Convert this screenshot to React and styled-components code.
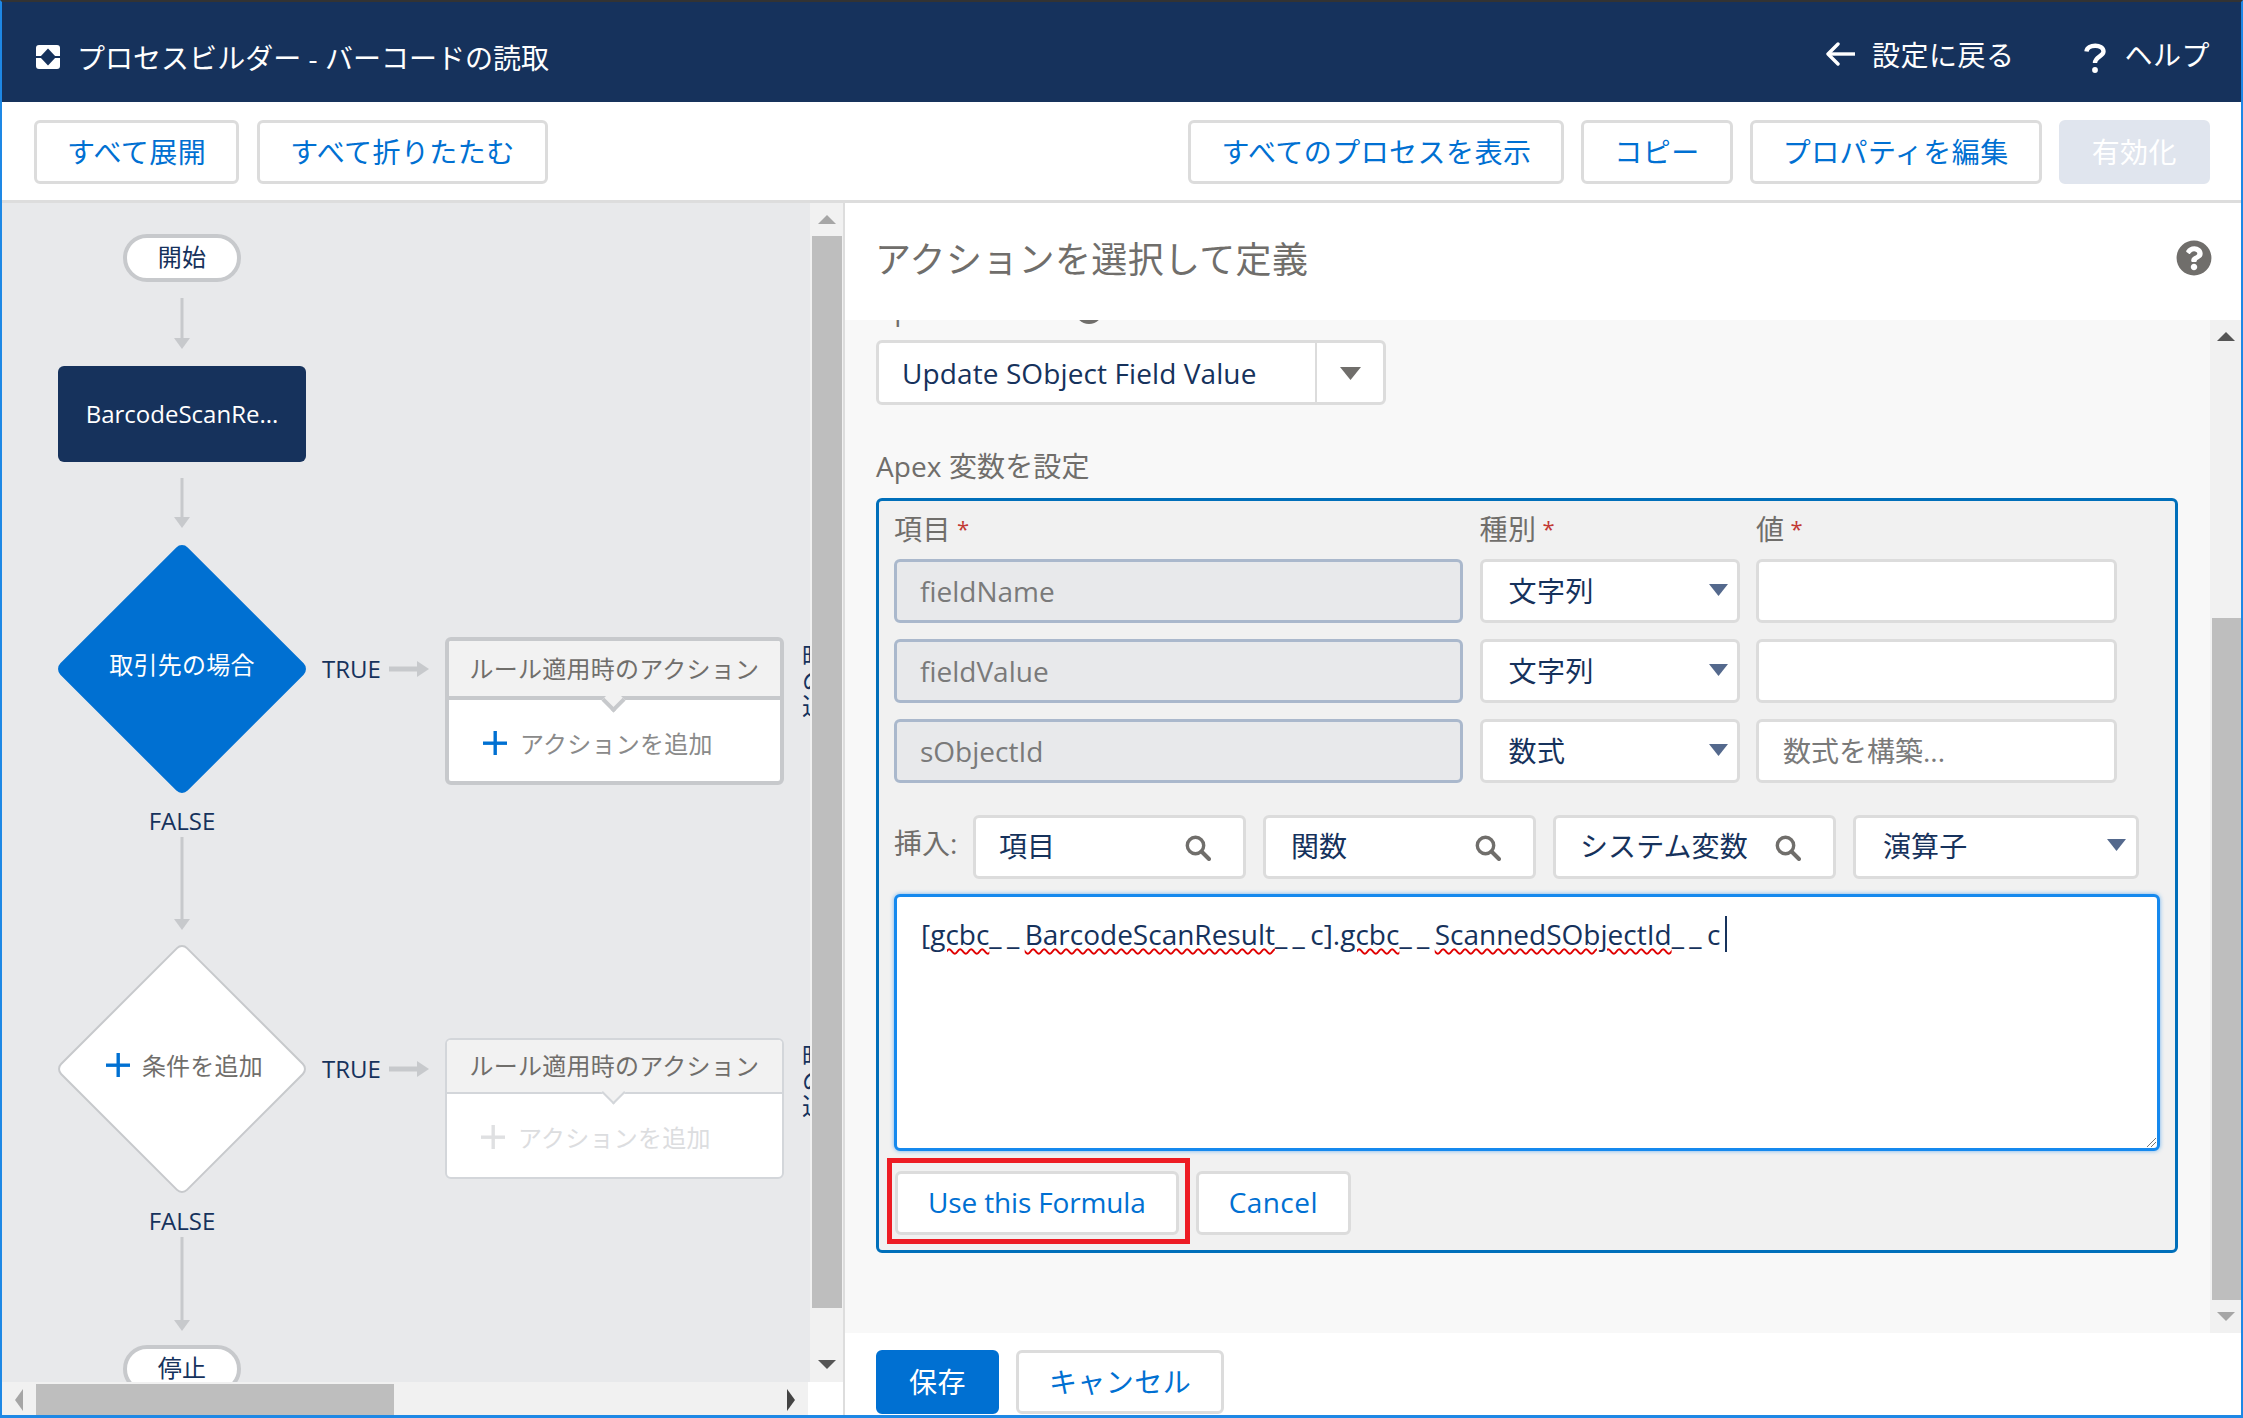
import React from "react";
import styled, {createGlobalStyle} from "styled-components";
import {FaQuestionCircle} from "react-icons/fa";

const GlobalStyle = createGlobalStyle`
  *, *::before, *::after {
    box-sizing: border-box;
  }
  html, body {
    margin: 0;
    padding: 0;
    background: #fff;
  }
  body {
    font-family: "Open Sans", "Noto Sans CJK JP", sans-serif;
    font-size: 28px;
    letter-spacing: 0.5px;
    color: #16325c;
  }
`;

const NODE_GREY = "#c7c9cc";

function DownArrow({height, gapTop = 16, gapBottom = 17}) {
  return (
    <DownArrowSvg
      width="16"
      height={height}
      viewBox={`0 0 16 ${height}`}
      $gapTop={gapTop}
      $gapBottom={gapBottom}
    >
      <rect x="6.5" y="0" width="3" height={height - 8} fill={NODE_GREY} />
      <polygon points={`0,${height - 11} 16,${height - 11} 8,${height}`} fill={NODE_GREY} />
    </DownArrowSvg>
  );
}

function RightArrow() {
  return (
    <RightArrowSvg width="40" height="16" viewBox="0 0 40 16">
      <rect x="0" y="5.5" width="30" height="5" fill={NODE_GREY} />
      <polygon points="28,0 40,8 28,16" fill={NODE_GREY} />
    </RightArrowSvg>
  );
}

function Plus({muted}) {
  return (
    <PlusSvg width="24" height="24" viewBox="0 0 24 24" $muted={muted}>
      <rect x="10.5" y="0" width="3.4" height="24" fill="currentColor" />
      <rect x="0" y="10.5" width="24" height="3.4" fill="currentColor" />
    </PlusSvg>
  );
}

function Caret({width = 19, height = 12}) {
  return (
    <CaretSvg width={width} height={height} viewBox="0 0 19 12" preserveAspectRatio="none">
      <polygon points="0,0 19,0 9.5,12" fill="currentColor" />
    </CaretSvg>
  );
}

function SearchIcon() {
  return (
    <SearchSvg width="26" height="26" viewBox="0 0 26 26">
      <circle cx="10.5" cy="10.5" r="8.2" fill="none" stroke="#706e6b" strokeWidth="3.4" />
      <path d="M16.5 16.5 L24 24" stroke="#706e6b" strokeWidth="4" strokeLinecap="round" />
    </SearchSvg>
  );
}

function Decision({added, label}) {
  return (
    <DecisionRow>
      <Diamond $outline={added}>
        {added ? (
          <DiamondLabel $outline>
            <Plus />
            <span>条件を追加</span>
          </DiamondLabel>
        ) : (
          <DiamondLabel>{label}</DiamondLabel>
        )}
      </Diamond>
      <TrueLabel>TRUE</TrueLabel>
      <RightArrow />
      <RuleBox $muted={added}>
        <RuleHead $muted={added}>ルール適用時のアクション</RuleHead>
        <RuleBody $muted={added}>
          <Plus muted={added} />
          <span>アクションを追加</span>
        </RuleBody>
      </RuleBox>
      <ClippedNote>
        時<br />
        の<br />
        追
      </ClippedNote>
    </DecisionRow>
  );
}

function TypeSelect({children}) {
  return (
    <FieldBox>
      <span>{children}</span>
      <Caret />
    </FieldBox>
  );
}

export default function App() {
  return (
    <Window>
      <GlobalStyle />
      <Header>
        <HeaderTitle>
          <svg width="24" height="24" viewBox="0 0 24 24">
            <rect width="24" height="24" rx="3" fill="#fff" />
            <rect x="0" y="11" width="24" height="2" fill="#16325c" />
            <polygon points="12,3.5 20,12 12,20.5 4,12" fill="#16325c" />
          </svg>
          <span>プロセスビルダー - バーコードの読取</span>
        </HeaderTitle>
        <HeaderLinks>
          <HeaderLink $gap="16px">
            <svg width="31" height="24" viewBox="0 0 31 24" fill="none" stroke="#fff" strokeWidth="3.4">
              <path d="M3 12 H30" />
              <path d="M13 2 L3 12 L13 22" strokeLinecap="round" strokeLinejoin="round" />
            </svg>
            設定に戻る
          </HeaderLink>
          <HeaderLink $gap="18px">
            <HelpGlyph width="22" height="30" viewBox="0 0 22 30" fill="none" stroke="#fff">
              <path d="M2.5 8.5 C3 1 19.5 0.5 19.5 8.5 C19.5 13.5 11 13.5 11 20" strokeWidth="4.4" />
              <circle cx="11" cy="27" r="2.9" fill="#fff" stroke="none" />
            </HelpGlyph>
            ヘルプ
          </HeaderLink>
        </HeaderLinks>
      </Header>

      <Toolbar>
        <ToolGroup $gap="18px">
          <Button>すべて展開</Button>
          <Button>すべて折りたたむ</Button>
        </ToolGroup>
        <ToolGroup $gap="17px">
          <Button>すべてのプロセスを表示</Button>
          <Button>コピー</Button>
          <Button>プロパティを編集</Button>
          <Button $disabled>有効化</Button>
        </ToolGroup>
      </Toolbar>

      <Main>
        <LeftPane>
          <CanvasRow>
            <Canvas>
              <Pill>開始</Pill>
              <DownArrow height={51} />
              <ActionNode>BarcodeScanRe...</ActionNode>
              <DownArrow height={50} gapBottom={16} />
              <Decision label="取引先の場合" />
              <FalseLabel>FALSE</FalseLabel>
              <DownArrow height={93} gapTop={0} gapBottom={14} />
              <Decision added />
              <FalseLabel>FALSE</FalseLabel>
              <DownArrow height={94} gapTop={0} gapBottom={14} />
              <Pill>停止</Pill>
            </Canvas>
            <VScroll $width="33px">
              <ScrollEnd $height="33px">
                <ScrollTri $dir="up" $color="#a6a6a6" />
              </ScrollEnd>
              <CanvasThumb />
              <ScrollEnd $height="74px">
                <ScrollTri $dir="down" $color="#555" $top="52px" />
              </ScrollEnd>
            </VScroll>
          </CanvasRow>
          <HScrollRow>
            <HScroll>
              <ScrollTri $dir="left" $color="#a6a6a6" />
              <HThumb />
              <ScrollTri $dir="right" $color="#444" />
            </HScroll>
          </HScrollRow>
        </LeftPane>

        <RightPane>
          <PaneTitle>
            <h2>アクションを選択して定義</h2>
            <FaQuestionCircle size={36} color="#706e6b" />
          </PaneTitle>
          <PaneBody>
            <PaneContent>
              <ClippedLabelRow>
                <span>Apex</span>
                <InfoDot />
              </ClippedLabelRow>
              <ActionSelect>
                <span>Update SObject Field Value</span>
                <ActionCaret>
                  <Caret width={21} height={13} />
                </ActionCaret>
              </ActionSelect>
              <SectionLabel>Apex 変数を設定</SectionLabel>
              <VariablePanel>
                <VariableGrid>
                  <ColumnLabel>項目<Req>*</Req></ColumnLabel>
                  <ColumnLabel>種別<Req>*</Req></ColumnLabel>
                  <ColumnLabel>値<Req>*</Req></ColumnLabel>

                  <ReadonlyField>fieldName</ReadonlyField>
                  <TypeSelect>文字列</TypeSelect>
                  <FieldBox />

                  <ReadonlyField>fieldValue</ReadonlyField>
                  <TypeSelect>文字列</TypeSelect>
                  <FieldBox />

                  <ReadonlyField>sObjectId</ReadonlyField>
                  <TypeSelect>数式</TypeSelect>
                  <FieldBox $placeholder>数式を構築...</FieldBox>
                </VariableGrid>

                <InsertRow>
                  <InsertLabel>挿入:</InsertLabel>
                  <InsertBox $width="273px" $pad="23px">
                    <span>項目</span>
                    <SearchIcon />
                  </InsertBox>
                  <InsertBox $width="273px" $pad="25px">
                    <span>関数</span>
                    <SearchIcon />
                  </InsertBox>
                  <InsertBox $width="283px" $pad="24px">
                    <span>システム変数</span>
                    <SearchIcon />
                  </InsertBox>
                  <InsertBox $width="286px" $pad="27px" $caret>
                    <span>演算子</span>
                    <Caret />
                  </InsertBox>
                </InsertRow>

                <FormulaBox>
                  <span>
                    [<Misspelled>gcbc</Misspelled><Dunder>__</Dunder>
                    <Misspelled>BarcodeScanResult</Misspelled><Dunder>__</Dunder>c].
                    <Misspelled>gcbc</Misspelled><Dunder>__</Dunder>
                    <Misspelled>ScannedSObjectId</Misspelled><Dunder>__</Dunder>c
                  </span>
                  <Cursor />
                  <ResizeGrip width="9" height="9" viewBox="0 0 9 9">
                    <path d="M0 9 L9 0 M4 9 L9 4" stroke="#777" strokeWidth="1" />
                  </ResizeGrip>
                </FormulaBox>

                <FormulaActions>
                  <Highlighted>
                    <Button $latin>Use this Formula</Button>
                  </Highlighted>
                  <Button>Cancel</Button>
                </FormulaActions>
              </VariablePanel>
            </PaneContent>
            <VScroll $width="31px">
              <ScrollEnd $height="298px">
                <ScrollTri $dir="up" $color="#555" $top="12px" />
              </ScrollEnd>
              <BodyThumb />
              <ScrollEnd $height="33px">
                <ScrollTri $dir="down" $color="#a6a6a6" />
              </ScrollEnd>
            </VScroll>
          </PaneBody>
          <PaneFooter>
            <Button $primary>保存</Button>
            <Button>キャンセル</Button>
          </PaneFooter>
        </RightPane>
      </Main>
    </Window>
  );
}

const Window = styled.div`
  width: 2243px;
  height: 1418px;
  display: flex;
  flex-direction: column;
  overflow: hidden;
  border-top: 2px solid #333;
  border-left: 2px solid #1e88e5;
  border-right: 2px solid #1e88e5;
  border-bottom: 3px solid #1e88e5;
  background: #fff;
`;

const Header = styled.header`
  flex: none;
  height: 100px;
  display: flex;
  align-items: center;
  justify-content: space-between;
  padding: 7px 31px 0 34px;
  background: #16325c;
  color: #fff;
`;

const HeaderTitle = styled.div`
  display: flex;
  align-items: center;
  gap: 17px;
  margin-top: 3px;
  letter-spacing: 0.03px;
`;

const HeaderLinks = styled.div`
  display: flex;
  align-items: center;
  gap: 70px;
  margin-top: -3px;
`;

const HeaderLink = styled.div`
  display: flex;
  align-items: center;
  gap: ${(p) => p.$gap};
`;

const HelpGlyph = styled.svg`
  margin-top: 8px;
`;

const Toolbar = styled.div`
  flex: none;
  height: 101px;
  display: flex;
  justify-content: space-between;
  padding: 18px 31px 0 32px;
  border-bottom: 3px solid #dddddd;
  background: #fff;
`;

const ToolGroup = styled.div`
  display: flex;
  gap: ${(p) => p.$gap};
`;

const Button = styled.button`
  height: 64px;
  padding: 0 30px 3px;
  border: 3px solid ${(p) => (p.$primary ? "#0070d2" : p.$disabled ? "#e0e5ee" : "#dcdcdc")};
  border-radius: 6px;
  background: ${(p) => (p.$primary ? "#0070d2" : p.$disabled ? "#e0e5ee" : "#fff")};
  color: ${(p) => (p.$primary || p.$disabled ? "#fff" : "#0070d2")};
  font: inherit;
  letter-spacing: ${(p) => (p.$latin ? "-0.15px" : "0.45px")};
  white-space: nowrap;
  cursor: pointer;
`;

const Main = styled.div`
  flex: 1;
  min-height: 0;
  display: flex;
`;

const LeftPane = styled.div`
  flex: none;
  width: 843px;
  display: flex;
  flex-direction: column;
  border-right: 2px solid #dddddd;
`;

const CanvasRow = styled.div`
  flex: 1;
  min-height: 0;
  display: flex;
`;

const Canvas = styled.div`
  flex: 1;
  min-width: 0;
  overflow: hidden;
  display: flex;
  flex-direction: column;
  align-items: flex-start;
  padding: 31px 0 0 56px;
  background: #e8e9eb;
  font-size: 24px;
  letter-spacing: 0.25px;
`;

const Pill = styled.div`
  flex: none;
  width: 118px;
  height: 48px;
  margin-left: 65px;
  padding-bottom: 2px;
  display: flex;
  align-items: center;
  justify-content: center;
  border: 4px solid ${NODE_GREY};
  border-radius: 24px;
  background: #fff;
  color: #16325c;
  line-height: 1;
`;

const DownArrowSvg = styled.svg`
  flex: none;
  display: block;
  margin: ${(p) => p.$gapTop}px 0 ${(p) => p.$gapBottom}px 116px;
`;

const ActionNode = styled.div`
  flex: none;
  width: 248px;
  height: 96px;
  padding-bottom: 2px;
  display: flex;
  align-items: center;
  justify-content: center;
  border-radius: 6px;
  background: #16325c;
  color: #fff;
  letter-spacing: 0;
`;

const DecisionRow = styled.div`
  flex: none;
  display: flex;
  align-items: flex-start;
`;

const Diamond = styled.div`
  flex: none;
  position: relative;
  width: 248px;
  height: 250px;
  display: flex;
  align-items: center;
  justify-content: center;
  &::before {
    content: "";
    position: absolute;
    left: 34px;
    top: 35px;
    width: 180px;
    height: 180px;
    border-radius: 8px;
    transform: rotate(45deg);
    background: ${(p) => (p.$outline ? "#fff" : "#0070d2")};
    border: ${(p) => (p.$outline ? `2px solid ${NODE_GREY}` : "none")};
  }
`;

const DiamondLabel = styled.div`
  position: relative;
  display: flex;
  align-items: center;
  gap: 12px;
  margin: ${(p) => (p.$outline ? "-9px 0 0 5px" : "-12px 0 0")};
  color: ${(p) => (p.$outline ? "#706e6b" : "#fff")};
`;

const TrueLabel = styled.div`
  flex: none;
  margin: 109px 8px 0 16px;
  color: #16325c;
  line-height: 32px;
  letter-spacing: 0;
`;

const RightArrowSvg = styled.svg`
  flex: none;
  margin: 117px 16px 0 0;
`;

const RuleBox = styled.div`
  flex: none;
  width: 339px;
  height: ${(p) => (p.$muted ? "141px" : "148px")};
  margin-top: ${(p) => (p.$muted ? "94px" : "93px")};
  display: flex;
  flex-direction: column;
  border: ${(p) => (p.$muted ? "2px solid #d3d6da" : `4px solid ${NODE_GREY}`)};
  border-radius: 6px;
  background: #fff;
  overflow: hidden;
`;

const RuleHead = styled.div`
  flex: none;
  position: relative;
  height: ${(p) => (p.$muted ? "54px" : "59px")};
  padding-bottom: 3px;
  display: flex;
  align-items: center;
  justify-content: center;
  background: #f2f2f2;
  border-bottom: ${(p) => (p.$muted ? "2px solid #d3d6da" : `4px solid ${NODE_GREY}`)};
  color: #706e6b;
  &::before {
    content: "";
    position: absolute;
    left: 50%;
    bottom: ${(p) => (p.$muted ? "-9px" : "-13px")};
    width: 17px;
    height: 17px;
    margin-left: -9px;
    transform: rotate(45deg);
    background: #f2f2f2;
    border-right: ${(p) => (p.$muted ? "2px solid #d3d6da" : `4px solid ${NODE_GREY}`)};
    border-bottom: ${(p) => (p.$muted ? "2px solid #d3d6da" : `4px solid ${NODE_GREY}`)};
  }
`;

const RuleBody = styled.div`
  flex: 1;
  display: flex;
  align-items: center;
  gap: 13px;
  padding: ${(p) => (p.$muted ? "2px" : "4px")} 0 0 34px;
  color: ${(p) => (p.$muted ? "#dcdddf" : "#8a8a8a")};
`;

const PlusSvg = styled.svg`
  flex: none;
  color: ${(p) => (p.$muted ? "#dfe0e2" : "#0070d2")};
`;

const ClippedNote = styled.div`
  flex: none;
  margin: 99px 0 0 18px;
  line-height: 25px;
  color: #16325c;
`;

const FalseLabel = styled.div`
  flex: none;
  width: 248px;
  height: 32px;
  margin-top: 11px;
  text-align: center;
  line-height: 32px;
  color: #16325c;
  letter-spacing: 0;
`;

const VScroll = styled.div`
  flex: none;
  width: ${(p) => p.$width};
  display: flex;
  flex-direction: column;
  align-items: flex-end;
  background: #f1f1f1;
`;

const ScrollEnd = styled.div`
  flex: none;
  width: 100%;
  height: ${(p) => p.$height};
  display: flex;
  align-items: center;
  justify-content: center;
`;

const triangles = {
  up: (c) => `border-left: 9px solid transparent; border-right: 9px solid transparent; border-bottom: 9px solid ${c};`,
  down: (c) => `border-left: 9px solid transparent; border-right: 9px solid transparent; border-top: 9px solid ${c};`,
  left: (c) => `border-top: 11px solid transparent; border-bottom: 11px solid transparent; border-right: 8px solid ${c};`,
  right: (c) => `border-top: 11px solid transparent; border-bottom: 11px solid transparent; border-left: 8px solid ${c};`,
};

const ScrollTri = styled.span`
  flex: none;
  width: 0;
  height: 0;
  ${(p) => triangles[p.$dir](p.$color)}
  ${(p) => p.$top && `align-self: flex-start; margin-top: ${p.$top};`}
`;

const CanvasThumb = styled.div`
  flex: 1;
  width: 30px;
  margin-right: 1px;
  background: #bebebe;
`;

const BodyThumb = styled.div`
  flex: 1;
  width: 29px;
  background: #bebebe;
`;

const HScrollRow = styled.div`
  flex: none;
  height: 33px;
  display: flex;
  background: #fff;
`;

const HScroll = styled.div`
  width: 806px;
  display: flex;
  align-items: center;
  padding: 2px 13px 0 13px;
  background: #f1f1f1;
`;

const HThumb = styled.div`
  flex: none;
  width: 358px;
  height: 31px;
  margin: 0 auto 0 13px;
  background: #bebebe;
`;

const RightPane = styled.div`
  flex: 1;
  min-width: 0;
  display: flex;
  flex-direction: column;
`;

const PaneTitle = styled.div`
  flex: none;
  height: 117px;
  display: flex;
  align-items: center;
  justify-content: space-between;
  padding: 0 29px 8px 30px;
  h2 {
    margin: 0;
    font-size: 36px;
    font-weight: 400;
    letter-spacing: 0.35px;
    color: #706e6b;
  }
`;

const PaneBody = styled.div`
  flex: 1;
  min-height: 0;
  display: flex;
  background: #f8f8f8;
`;

const PaneContent = styled.div`
  flex: 1;
  min-width: 0;
  overflow: hidden;
  padding-left: 31px;
`;

const ClippedLabelRow = styled.div`
  height: 36px;
  margin-top: -29px;
  display: flex;
  align-items: flex-start;
  gap: 132px;
  line-height: 36px;
  color: #706e6b;
`;

const InfoDot = styled.span`
  flex: none;
  width: 28px;
  height: 28px;
  margin-top: 5px;
  border-radius: 50%;
  background: #706e6b;
`;

const ActionSelect = styled.div`
  width: 510px;
  height: 65px;
  margin-top: 13px;
  display: flex;
  align-items: center;
  justify-content: space-between;
  padding-left: 23px;
  border: 3px solid #dcdcdc;
  border-radius: 6px;
  background: #fff;
  color: #16325c;
  letter-spacing: 0.1px;
`;

const ActionCaret = styled.div`
  align-self: stretch;
  width: 68px;
  padding-top: 2px;
  display: flex;
  align-items: center;
  justify-content: center;
  border-left: 2px solid #dcdcdc;
  color: #706e6b;
`;

const SectionLabel = styled.div`
  height: 36px;
  margin-top: 43px;
  margin-bottom: 14px;
  line-height: 36px;
  color: #706e6b;
  letter-spacing: 0.1px;
`;

const VariablePanel = styled.section`
  width: 1302px;
  height: 755px;
  padding: 9px 0 0 15px;
  border: 3px solid #006fba;
  border-radius: 6px;
  background: #f1f1f1;
`;

const VariableGrid = styled.div`
  display: grid;
  grid-template-columns: 569px 260px 361px;
  grid-template-rows: 33px repeat(3, 64px);
  column-gap: 16.5px;
  row-gap: 16px;
`;

const ColumnLabel = styled.div`
  height: 33px;
  line-height: 36px;
  color: #706e6b;
`;

const Req = styled.span`
  margin-left: 6px;
  color: #c23934;
  font-size: 22px;
  vertical-align: 3px;
`;

const ReadonlyField = styled.div`
  display: flex;
  align-items: center;
  padding-left: 23px;
  border: 3px solid #aab8cc;
  border-radius: 6px;
  background: #e8e9eb;
  color: #7a7a7a;
  letter-spacing: 0;
`;

const FieldBox = styled.div`
  display: flex;
  align-items: center;
  justify-content: space-between;
  padding: 0 9px 2px ${(p) => (p.$placeholder ? "24px" : "26px")};
  border: 3px solid #dcdcdc;
  border-radius: 6px;
  background: #fff;
  color: ${(p) => (p.$placeholder ? "#7a7a7a" : "#16325c")};
  letter-spacing: ${(p) => (p.$placeholder ? "0" : "0.5px")};
`;

const CaretSvg = styled.svg`
  flex: none;
  color: #54698d;
  ${ActionCaret} & {
    color: #706e6b;
  }
`;

const InsertRow = styled.div`
  height: 64px;
  margin-top: 32px;
  display: flex;
  gap: 17px;
`;

const InsertLabel = styled.div`
  flex: none;
  width: 62px;
  line-height: 56px;
  color: #706e6b;
  white-space: nowrap;
  letter-spacing: 0;
`;

const InsertBox = styled.div`
  flex: none;
  width: ${(p) => p.$width};
  display: flex;
  align-items: center;
  justify-content: space-between;
  padding: 0 ${(p) => (p.$caret ? "10px" : "32px")} 4px ${(p) => p.$pad};
  border: 3px solid #dcdcdc;
  border-radius: 6px;
  background: #fff;
  color: #16325c;
  letter-spacing: 0.1px;
`;

const SearchSvg = styled.svg`
  flex: none;
  margin-top: 6px;
`;

const FormulaBox = styled.div`
  position: relative;
  width: 1266px;
  height: 257px;
  margin: 15px 0 0 0;
  display: flex;
  align-items: flex-start;
  padding: 17px 0 0 24px;
  border: 3px solid #1589ee;
  border-radius: 6px;
  background: #fff;
  box-shadow: 0 0 4px rgba(21, 137, 238, 0.6);
  color: #16325c;
  line-height: 40px;
  letter-spacing: 0;
  & > span {
    white-space: nowrap;
  }
`;

const Misspelled = styled.span`
  text-decoration: underline wavy #e00000 1.5px;
  text-underline-offset: 3px;
`;

const Dunder = styled.span`
  letter-spacing: 5.4px;
`;

const Cursor = styled.span`
  flex: none;
  width: 2px;
  height: 36px;
  margin: 2px 0 0 5px;
  background: #16325c;
`;

const ResizeGrip = styled.svg`
  position: absolute;
  right: 1px;
  bottom: 1px;
`;

const FormulaActions = styled.div`
  margin-top: 20px;
  margin-left: 1px;
  display: flex;
  gap: 17px;
`;

const Highlighted = styled.div`
  position: relative;
  &::after {
    content: "";
    position: absolute;
    top: -13px;
    left: -8px;
    right: -11px;
    bottom: -9px;
    border: 5px solid #ed1c24;
    pointer-events: none;
  }
`;

const PaneFooter = styled.div`
  flex: none;
  height: 82px;
  display: flex;
  gap: 17px;
  padding: 17px 0 0 31px;
`;
